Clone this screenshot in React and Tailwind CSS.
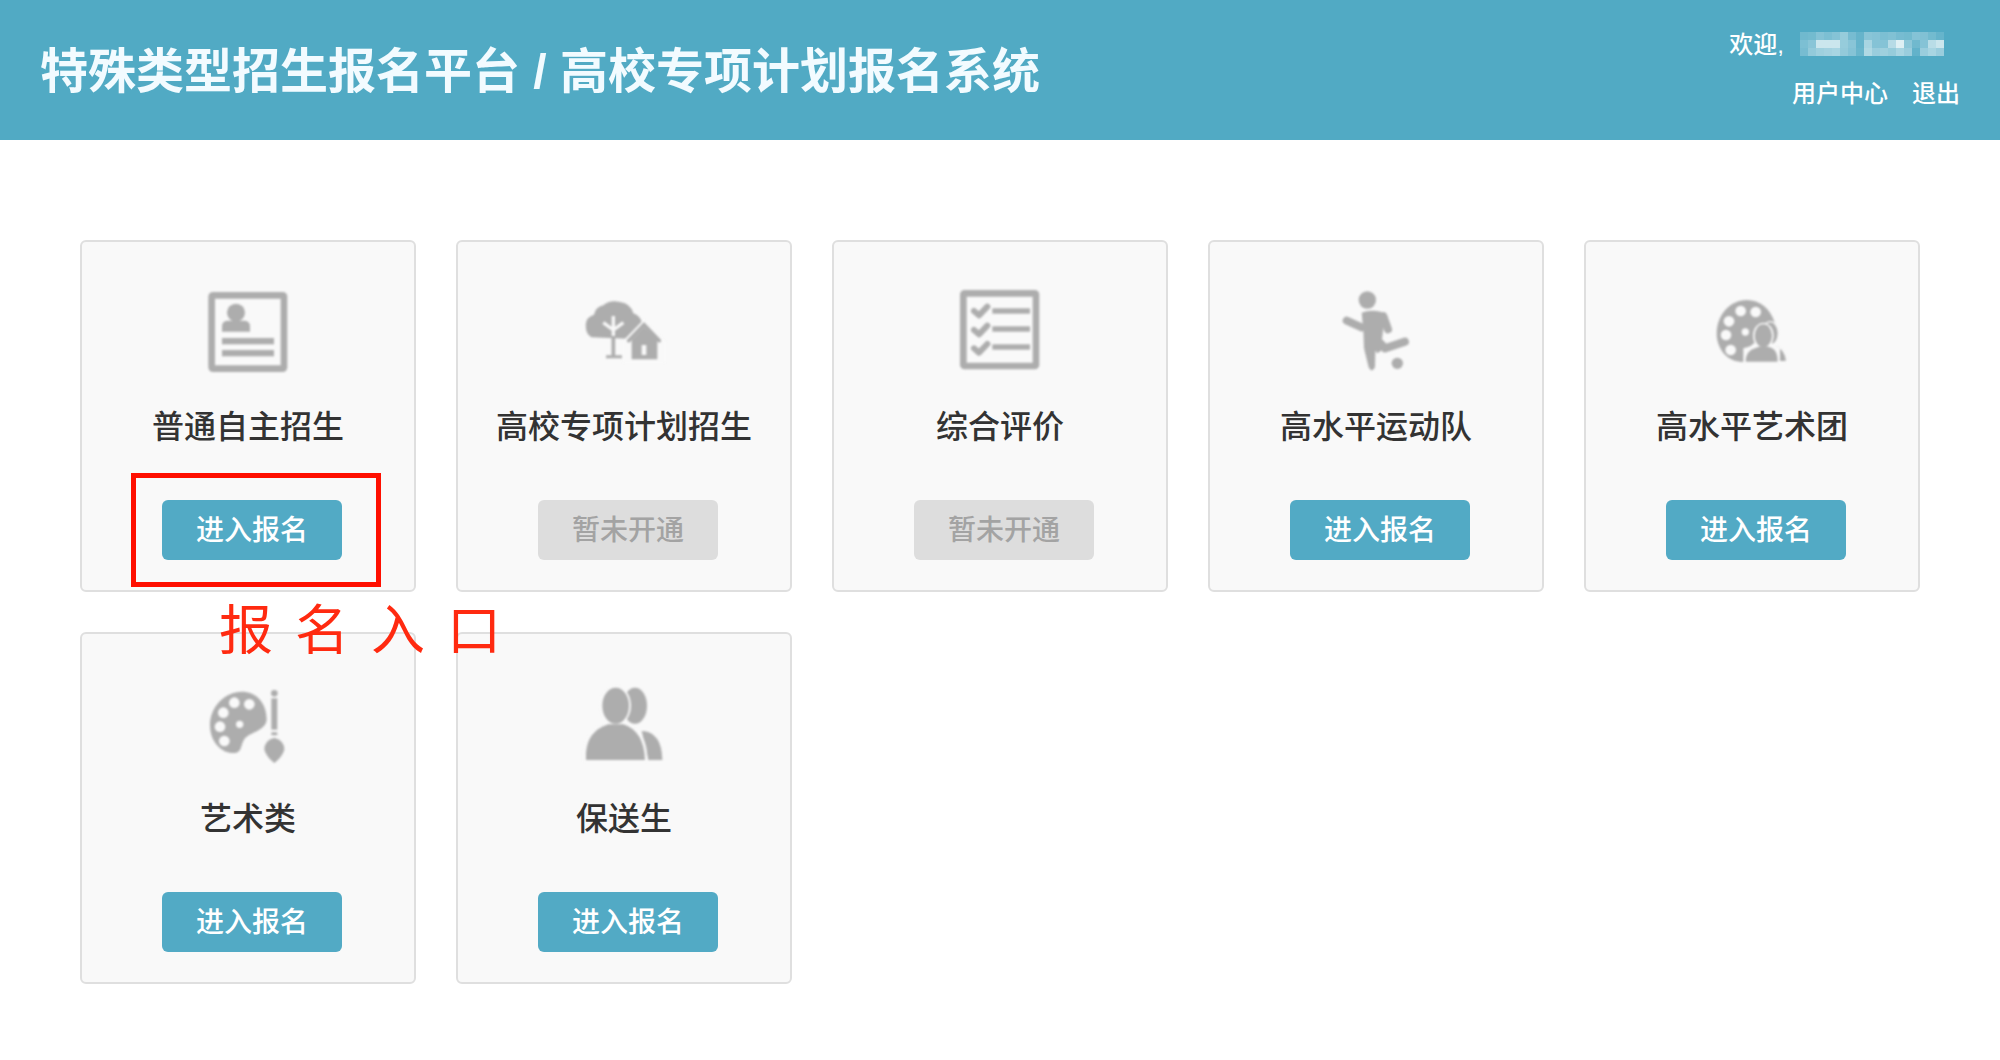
const G = "#adadad";
const BG = "#f9f9f9";

function Svg({ minX, minY = 0, children }) {
  return (
    <svg width="120" height="100" viewBox={`${minX} ${minY} 360 300`} className="blur-[0.8px]" fill={G}>
      {children}
    </svg>
  );
}

const IdCard = () => (
  <Svg minX={-6}>
    <rect x="65" y="46" width="217" height="220" rx="4" fill="none" stroke={G} strokeWidth="20" />
    <circle cx="138" cy="98" r="27" />
    <path d="M96 155V138Q96 124 112 122H164Q180 124 180 138V155Z" />
    <rect x="96" y="174" width="156" height="19" />
    <rect x="96" y="210" width="156" height="19" />
  </Svg>
);

const TreeHouse = () => (
  <Svg minX={-18}>
    <path d="M64 172Q44 160 48 128Q50 112 72 104Q76 82 100 76Q120 58 150 66Q182 70 190 100Q214 110 216 130L172 176Z" />
    <path d="M130 108V168M130 150L100 128M130 150L160 128" stroke={BG} strokeWidth="10" fill="none" />
    <path d="M130 170V228" stroke={G} strokeWidth="11" fill="none" />
    <rect x="108" y="226" width="48" height="9" rx="2" />
    <path d="M158 184L222 118L286 184V250H158Z" fill={BG} />
    <path d="M176 182L222 134L268 182" stroke={G} strokeWidth="11" fill="none" strokeLinecap="round" />
    <path d="M185 180L222 142L262 180V238H185Z" />
    <rect x="215" y="195" width="14" height="30" fill={BG} />
  </Svg>
);

const CheckList = () => (
  <Svg minX={-15}>
    <rect x="55" y="40" width="218" height="218" rx="4" fill="none" stroke={G} strokeWidth="20" />
    <rect x="142" y="85" width="113" height="16" />
    <rect x="142" y="139" width="113" height="16" />
    <rect x="142" y="193" width="113" height="16" />
    <g fill="none" stroke={G} strokeWidth="18" strokeLinecap="round" strokeLinejoin="round">
      <path d="M87 93L102 106L127 80" />
      <path d="M87 150L102 163L127 137" />
      <path d="M87 205L102 218L127 192" />
    </g>
  </Svg>
);

const Kicker = () => (
  <Svg minX={-12}>
    <circle cx="142" cy="60" r="26" />
    <path d="M125 98Q150 88 185 96L192 130L186 178L206 198L172 220L166 212L165 262Q155 280 146 262L132 205L130 150Z" />
    <g fill="none" stroke={G} strokeWidth="24" strokeLinecap="round" strokeLinejoin="round">
      <path d="M80 122L125 142" />
      <path d="M190 108L204 148" />
      <path d="M195 205L255 185" />
    </g>
    <circle cx="232" cy="250" r="17" />
  </Svg>
);

const Palette = ({ holes, d }) => (
  <>
    <path d={d} />
    {holes.map(([x, y, r], i) => (
      <circle key={i} cx={x} cy={y} r={r} fill={BG} />
    ))}
  </>
);

const ArtGroup = () => (
  <Svg minX={-9}>
    <Palette
      d="M155 60C105 60 65 105 65 160C65 210 100 248 145 246L215 180L240 130C225 85 195 60 155 60Z"
      holes={[[137, 93, 16], [182, 96, 16], [102, 124, 16], [93, 165, 16], [107, 210, 16], [151, 156, 11]]}
    />
    <ellipse cx="226" cy="160" rx="24" ry="35" stroke={BG} strokeWidth="4" />
    <path d="M240 196Q272 205 275 245H235Z" stroke={BG} strokeWidth="4" />
    <path d="M145 250V205Q170 200 176 190L232 190Q240 200 255 205V250Z" fill={BG} />
    <ellipse cx="205" cy="167" rx="31" ry="39" fill={BG} />
    <ellipse cx="205" cy="167" rx="26" ry="34" />
    <path d="M152 245Q152 212 182 204Q195 198 205 198Q218 198 230 204Q248 212 248 245Z" />
  </Svg>
);

const ArtBrush = () => (
  <Svg minX={-21} minY={-9}>
    <Palette
      d="M140 50C90 50 45 95 45 150C45 205 85 238 120 234C145 230 135 200 155 185C170 172 212 165 215 135C215 85 185 50 140 50Z"
      holes={[[118, 83, 16], [163, 88, 16], [85, 113, 16], [75, 155, 16], [88, 198, 16], [134, 148, 11]]}
    />
    <circle cx="238" cy="55" r="10" />
    <rect x="229" y="70" width="18" height="94" />
    <rect x="229" y="172" width="18" height="9" rx="2" />
    <path d="M238 188Q268 196 268 224Q262 245 238 264Q214 245 208 224Q208 196 238 188Z" />
  </Svg>
);

const People = () => (
  <Svg minX={-18} minY={-9}>
    <ellipse cx="195" cy="92" rx="36" ry="54" />
    <path d="M215 168Q275 170 277 255H235Z" />
    <ellipse cx="137" cy="92" rx="46" ry="60" fill={BG} />
    <ellipse cx="137" cy="92" rx="40" ry="54" />
    <path d="M40 262V235Q45 160 110 148L165 148Q235 165 232 262Z" fill={BG} />
    <path d="M48 255V235Q52 168 115 148H160Q222 168 225 255Z" />
  </Svg>
);

const cards = [
  { title: "普通自主招生", Icon: IdCard, open: true, mark: true },
  { title: "高校专项计划招生", Icon: TreeHouse, open: false },
  { title: "综合评价", Icon: CheckList, open: false },
  { title: "高水平运动队", Icon: Kicker, open: true },
  { title: "高水平艺术团", Icon: ArtGroup, open: true },
  { title: "艺术类", Icon: ArtBrush, open: true },
  { title: "保送生", Icon: People, open: true },
];

const mosaic = [
  [0.18, 0.2, 0.3, 0.25, 0.3, 0.4, 0.22, 0.12, 0.32, 0.3, 0.25, 0.28, 0.22, 0.2, 0.3, 0.28, 0.2, 0.12],
  [0.25, 0.32, 0.7, 0.7, 0.7, 0.4, 0.32, 0.12, 0.5, 0.3, 0.3, 0.58, 0.82, 0.35, 0.18, 0.3, 0.6, 0.7],
  [0.22, 0.38, 0.45, 0.48, 0.5, 0.38, 0.3, 0.15, 0.55, 0.42, 0.45, 0.4, 0.5, 0.42, 0.1, 0.42, 0.5, 0.42],
];

function Mosaic() {
  return (
    <svg width="152" height="24" viewBox="0 0 152 24">
      {mosaic.map((row, y) =>
        row.map((o, x) => <rect key={`${x}-${y}`} x={x * 8} y={y * 8} width="8" height="8" fill="#fff" opacity={o} />)
      )}
    </svg>
  );
}

function Card({ title, Icon, open, mark }) {
  return (
    <div className="relative h-[352px] rounded-md border-2 border-[#dfdfdf] bg-[#f9f9f9] pt-[38px] flex flex-col items-center">
      <Icon />
      <div className="mt-[23px] h-12 text-[32px] font-medium leading-[48px] text-[#333333]">{title}</div>
      <div
        className={`mt-[49px] ml-2 flex h-[60px] w-[180px] items-center justify-center rounded-md pt-px text-[28px] font-medium ${
          open ? "bg-[#52aac5] text-white" : "bg-[#dddddd] text-[#a3a3a3]"
        }`}
      >
        {open ? "进入报名" : "暂未开通"}
      </div>
      {mark && (
        <>
          <div className="absolute left-[49px] top-[231px] h-[114px] w-[250px] border-[5px] border-[#ff0f00]" />
          <div className="absolute left-[137px] top-[354px] z-10 whitespace-nowrap text-[54px] leading-[70px] tracking-[22px] text-[#ff2a10]">
            报名入口
          </div>
        </>
      )}
    </div>
  );
}

export default function App() {
  return (
    <div className="min-h-screen bg-white font-['Liberation_Sans','Noto_Sans_CJK_SC',sans-serif]">
      <header className="flex h-[140px] items-center justify-between bg-[#51aac4] pl-10 pr-10 text-white">
        <h1 className="blur-[0.6px] pt-[3px] text-[48px] font-bold leading-none text-[#f2fbff]">
          特殊类型招生报名平台 / 高校专项计划报名系统
        </h1>
        <div className="flex flex-col items-end self-start pt-[21px]">
          <div className="flex h-12 items-center text-[24px] font-medium">
            <span>欢迎,</span>
            <span className="ml-[16px] mr-[8px] -mt-[2px] block h-6 w-[152px]">
              <Mosaic />
            </span>
          </div>
          <div className="flex h-[50px] items-center gap-[24px] text-[24px] font-medium">
            <span>用户中心</span>
            <span>退出</span>
          </div>
        </div>
      </header>
      <main className="grid grid-cols-[repeat(5,336px)] gap-10 pl-20 pt-[100px]">
        {cards.map((c) => (
          <Card key={c.title} {...c} />
        ))}
      </main>
    </div>
  );
}
